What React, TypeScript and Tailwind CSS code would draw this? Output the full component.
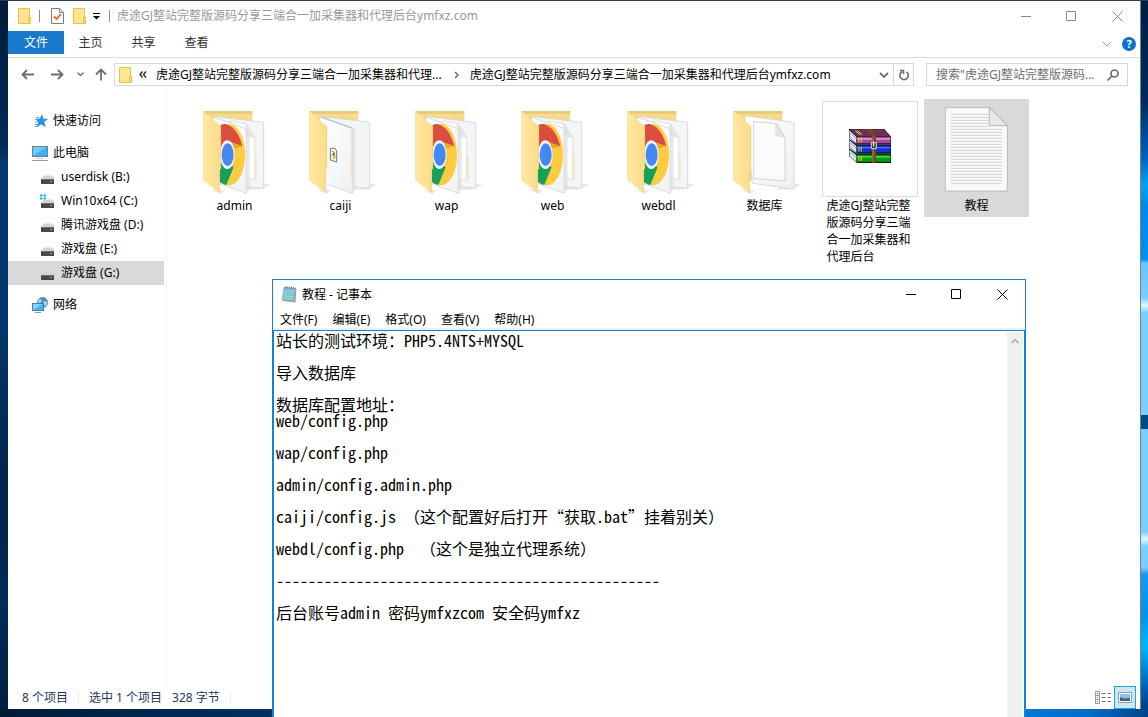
import type { ReactNode } from "react";

const uiFont = "font-['Noto_Sans','Noto_Sans_CJK_SC',sans-serif]";

const siteName = "虎途GJ整站完整版源码分享三端合一加采集器和代理";

const noteText = `站长的测试环境：PHP5.4NTS+MYSQL

导入数据库

数据库配置地址：
web/config.php

wap/config.php

admin/config.admin.php

caiji/config.js （这个配置好后打开“获取.bat”挂着别关）

webdl/config.php  （这个是独立代理系统）

------------------------------------------------

后台账号admin 密码ymfxzcom 安全码ymfxz`;

function SmallFolder() {
  return (
    <svg viewBox="0 0 14 16" className="h-4 w-[14px] shrink-0">
      <path d="M.5.5h11v9h1v6H.5z" fill="#ffe58f" stroke="#e8c34a" />
      <path d="M10.500 9.500h2v6h-2z" fill="#f7d874" stroke="#e8c34a" />
    </svg>
  );
}

function CheckedDoc() {
  return (
    <svg viewBox="0 0 13 16" className="h-4 w-[13px] shrink-0" fill="none">
      <path d="M.5.5h8l4 4v11H.5z" fill="#fbfbfb" stroke="#7d7d7d" />
      <path d="M8.500.5v4h4" stroke="#7d7d7d" />
      <path d="m3 8.500 2.500 2.500L10 6" stroke="#e8602c" strokeWidth="1.800" />
    </svg>
  );
}

function StarIcon() {
  return (
    <svg viewBox="0 0 16 16" className="h-4 w-4">
      <path d="m10 2 1 4 4.500.2-3.700 2.600 1.400 4.700-4-2.600-4.200 2.900 1.600-4.700L4 6.200l4-.2z" fill="#2196e8" stroke="#1583d0" strokeWidth=".6" />
      <path d="M4 4.500h3M3 6.500h2M3.500 9h2M3 11.500h2M2.500 13.500h2" stroke="#4aaeec" />
    </svg>
  );
}

function ComputerIcon() {
  return (
    <svg viewBox="0 0 16 16" className="h-4 w-4">
      <rect x=".5" y="1.500" width="15" height="10" fill="#3db2f7" stroke="#5f7f95" />
      <path d="M1 11V2h13z" fill="#72cbfb" />
      <path d="M5 13.500h6" stroke="#c3ced6" />
      <path d="M0 15.500h16" stroke="#8aa0af" />
    </svg>
  );
}

function DriveIcon({ system = false }: { system?: boolean }) {
  return (
    <svg viewBox="0 0 16 16" className="h-4 w-4">
      <path d="M3.500 6.500h9L15 10H1z" fill="#d3d5d7" />
      <path d="M1 10h13v5H1z" fill="#45474a" />
      <path d="M1 10.500h13" stroke="#6d6f72" />
      <path d="M10 12.500h2" stroke="#4fe05a" />
      {system && (
        <>
          <path d="M0 1h7v6H0z" fill="#fff" />
          <path d="M0 1.500h2.500v2H0zm3.500 0h2.500v2H3.500zM0 4.500h2.500v2H0zm3.500 0h2.500v2H3.500z" fill="#19b2ec" />
        </>
      )}
    </svg>
  );
}

function NetworkIcon() {
  return (
    <svg viewBox="0 0 16 16" className="h-4 w-4">
      <circle cx="10.500" cy="5.500" r="5.200" fill="#4a93c0" stroke="#6d8da3" strokeWidth=".6" />
      <path d="M7 2.500c2-.8 3 .5 2.500 2S6.500 6 6 5zM12 4l3 1-1 4-3-2z" fill="#a8dcf0" />
      <rect x=".5" y="6.500" width="11" height="7" fill="#43b5f7" stroke="#477f9f" />
      <path d="M1 13V7h9z" fill="#85d3fb" />
      <path d="M3 15.500h6" stroke="#7f9caf" />
    </svg>
  );
}

function NotepadIcon() {
  return (
    <svg viewBox="0 0 16 17" className="h-[17px] w-4">
      <path d="m4 2 11.500.5-1 14L2 15z" fill="#b6a97c" />
      <path d="m3 1.500 11.500.5-1.500 13.500L1 14z" fill="#7cc3d4" stroke="#6797a5" strokeWidth=".5" />
      <path d="m3 5 10.500.5M2.600 7.500l10.500.5M2.200 10l10.500.5M1.800 12.300l10.500.6" stroke="#a6dbe6" strokeWidth=".7" />
      <path d="M4.500.5v2M6.500.5v2M8.500.7v2M10.500.7v2M12.500 1v2" stroke="#5d696e" strokeWidth=".8" />
    </svg>
  );
}

type FolderKind = "chrome" | "script" | "doc";

function FolderIcon({ kind }: { kind: FolderKind }) {
  return (
    <svg viewBox="-15 18 297 288" className="h-24 w-[99px]">
      <defs>
        <linearGradient id="flap" x1="0" x2="1">
          <stop offset="0" stopColor="#ffe7a3" />
          <stop offset="1" stopColor="#fcdc88" />
        </linearGradient>
        <linearGradient id="sheet" x1="0" y1="0" x2="1" y2="1">
          <stop offset="0" stopColor="#fff" />
          <stop offset="1" stopColor="#eff1f3" />
        </linearGradient>
        <clipPath id="page">
          <path d="M89 66 169 101v194L89 268z" />
        </clipPath>
      </defs>
      <path d="M190 258l54 12-34 14h-40zM60 283l45 2-14 12z" fill="#e4e4e4" opacity=".8" />
      <path d="M39 48h148v210H39z" fill="#f7da8c" />
      <path d="M39 48h148v8H50z" fill="#e8ca74" />
      {kind === "doc" ? (
        <>
          <path d="m74 62 148 20v200l-125-17z" fill="url(#sheet)" stroke="#c9ccd0" strokeWidth="2" />
          <path d="m101 80 70 6 24 42v130l-94-8z" fill="#fafbfc" stroke="#bfc4ca" strokeWidth="2" />
          <path d="m166 85 28 43-26-6z" fill="#e6e7e9" stroke="#c8cacc" />
          <path d="M101 80 166 85 194 128M198 180v75" fill="none" stroke="#f2d999" strokeWidth="2" strokeDasharray="12 5" />
        </>
      ) : (
        <>
          <path d="m74 64 147 18v198l-100-10z" fill="#f4f5f7" stroke="#c8cbce" strokeWidth="2" />
          {kind === "chrome" && (
            <>
              <path d="m120 78 48 8 26 42v125h-50z" fill="#fff" stroke="#e7d7a9" strokeWidth="2" />
              <path d="m167 86 27 42-30-8z" fill="#e7e8ea" stroke="#c9c9c9" />
              <path d="M198 182v73" stroke="#f0d890" strokeWidth="2" />
            </>
          )}
          <path d="m70 66 99 35v194L89 266z" fill="url(#sheet)" stroke="#c7cacd" strokeWidth="2" />
          <path d="M170 102h9v178l-9 15z" fill="#dcdee0" opacity=".7" />
        </>
      )}
      {kind === "chrome" && (
        <g clipPath="url(#page)">
          <ellipse cx="117" cy="179" rx="48" ry="92" fill="#fccb3e" />
          <path d="M85 100c6-16 20-16 34-8 18 10 32 34 38 62l-46-16-26 26z" fill="#dc4c40" />
          <path d="m113 138 44 16-30 8z" fill="#e6a92f" />
          <path d="M85 197l46 19-22 54c-9-2-17-6-24-12z" fill="#16a05a" />
          <ellipse cx="112" cy="179" rx="22" ry="43" fill="#f1f4fb" />
          <ellipse cx="113" cy="179" rx="18" ry="34" fill="#4688f1" />
        </g>
      )}
      {kind === "script" && (
        <>
          <path d="M166 104v150" stroke="#f3dfa5" strokeWidth="2" />
          <path d="m78 66 91 33" stroke="#b8b9ba" strokeWidth="3" />
          <path d="M103 160h14l5 8v33l-19-6z" fill="#f5f5f0" stroke="#777" strokeWidth="3" />
          <path d="M108 168l7 5-6 7 8 5-6 6" fill="none" stroke="#b9ac3f" strokeWidth="4" />
          <circle cx="114" cy="178" r="3" fill="#55575a" />
        </>
      )}
      <path d="M39 48 93 94v126l-4 6v67L39 256z" fill="url(#flap)" />
      <path d="M92 94v126l-4 6v67" fill="none" stroke="#eccf7d" strokeWidth="2" />
    </svg>
  );
}

function ArchiveIcon() {
  return (
    <svg viewBox="333 18 297 288" className="h-24 w-[99px]">
      <rect x="337.500" y="19.500" width="285" height="285" fill="#fff" stroke="#dcdcdc" strokeWidth="3" />
      {/* top book */}
      <path d="M417 102h106l20 23v23H441l-24-20z" fill="#1d1420" />
      <path d="M420 103h101l18 20H441z" fill="#6d3152" />
      <path d="M441 125h100v20H441z" fill="#a8489d" />
      <path d="M441 129h100v6H441z" fill="#da86cf" />
      <path d="m418 106 21 19v20l-20-17z" fill="#e5e2ea" />
      {/* middle book */}
      <path d="m417 132 24 16h102v28H441l-24-20z" fill="#101338" />
      <path d="M441 152h100v20H441z" fill="#1732c8" />
      <path d="M441 156h100v4H441z" fill="#5275fa" />
      <path d="m418 136 21 17v20l-20-17z" fill="#dfe4ec" />
      {/* bottom book */}
      <path d="m417 160 24 16h102v28H441l-24-20z" fill="#09260b" />
      <path d="M441 180h100v20H441z" fill="#0a9914" />
      <path d="M441 183h100v5H441z" fill="#2dd92c" />
      <path d="m418 164 21 17v20l-20-17z" fill="#dfe4ec" />
      <path d="M419 113l20 18M419 143l20 17M419 171l20 17" stroke="#878b93" strokeWidth="2" />
      <path d="M447 128v15M454 128v15M447 155v15M454 155v15M447 183v15M454 183v15M436 107l14 12M442 107l14 12" stroke="#d9d43a" strokeWidth="3" />
      <path d="m470 102 16 22v79h12v-81l-14-20z" fill="#79461b" />
      <path d="M489 125v77" stroke="#b97a3a" strokeWidth="3" />
      <path d="M484 143h15v18h-15z" fill="#444" stroke="#d5d5d5" strokeWidth="3" />
      <path d="M491 140v14" stroke="#fff" strokeWidth="3" />
    </svg>
  );
}

const textLines = Array.from({ length: 24 }, (_, i) => 58 + i * 9);

function TextFileIcon() {
  return (
    <svg viewBox="651 18 297 288" className="h-24 w-[99px]">
      <path d="M706 38h132l54 55v195H706z" fill="#f9f9fa" stroke="#a9a9a9" strokeWidth="2" />
      {textLines.map((y) => (
        <path key={y} d={`M722 ${y}h${y < 96 ? 114 : 154}`} stroke="#cfd1d3" strokeWidth="3" />
      ))}
      <path d="M838 38v54h54z" fill="#e8e8e9" stroke="#9b9b9b" strokeWidth="2" />
    </svg>
  );
}

const files: { name: string; icon: ReactNode; selected?: boolean }[] = [
  { name: "admin", icon: <FolderIcon kind="chrome" /> },
  { name: "caiji", icon: <FolderIcon kind="script" /> },
  { name: "wap", icon: <FolderIcon kind="chrome" /> },
  { name: "web", icon: <FolderIcon kind="chrome" /> },
  { name: "webdl", icon: <FolderIcon kind="chrome" /> },
  { name: "数据库", icon: <FolderIcon kind="doc" /> },
  { name: "虎途GJ整站完整版源码分享三端合一加采集器和代理后台", icon: <ArchiveIcon /> },
  { name: "教程", icon: <TextFileIcon />, selected: true },
];

const drives = [
  { name: "userdisk (B:)" },
  { name: "Win10x64 (C:)", system: true },
  { name: "腾讯游戏盘 (D:)" },
  { name: "游戏盘 (E:)" },
  { name: "游戏盘 (G:)", selected: true },
];

function WindowControls({ className }: { className: string }) {
  return (
    <div className={`flex h-full shrink-0 ${className}`}>
      <button aria-label="最小化" className="grid w-[46px] place-items-center">
        <svg viewBox="0 0 11 11" className="size-[11px]" stroke="currentColor"><path d="M0 5.500h10" /></svg>
      </button>
      <button aria-label="最大化" className="grid w-[45px] place-items-center">
        <svg viewBox="0 0 11 11" className="size-[11px]" stroke="currentColor" fill="none"><path d="M.5.5h9v9h-9z" /></svg>
      </button>
      <button aria-label="关闭" className="grid w-[46px] place-items-center">
        <svg viewBox="0 0 11 11" className="size-[11px]" stroke="currentColor"><path d="m.5.5 10 10m0-10-10 10" /></svg>
      </button>
    </div>
  );
}

function Chevron({ className }: { className: string }) {
  return (
    <svg viewBox="0 0 10 6" className={className} fill="none" stroke="currentColor">
      <path d="m1 1 4 4 4-4" />
    </svg>
  );
}

function NavItem({ icon, label, child, selected }: { icon: ReactNode; label: string; child?: boolean; selected?: boolean }) {
  return (
    <a
      href="#"
      className={`mr-[2px] flex h-6 items-center gap-[5px] ${child ? "pl-8" : "pl-6"} ${selected ? "bg-[#d9d9d9]" : ""}`}
    >
      {icon}
      {label}
    </a>
  );
}

function Explorer() {
  return (
    <main className="flex min-h-0 flex-1 flex-col bg-white">
      <header className="flex h-[30px] shrink-0 items-center pl-[10px] text-[#999]">
        <SmallFolder />
        <span className="ml-[7px] h-3 w-px bg-[#8c8c8c]" />
        <button aria-label="属性" className="ml-[11px]"><CheckedDoc /></button>
        <button aria-label="新建文件夹" className="ml-[9px]"><SmallFolder /></button>
        <button aria-label="自定义快速访问工具栏" className="ml-[6px] text-black">
          <svg viewBox="0 0 8 8" className="size-2"><path d="M0 1.500h7" stroke="currentColor" /><path d="M0 4h7L3.500 7.500z" fill="currentColor" /></svg>
        </button>
        <span className="ml-2 h-3 w-px bg-[#8c8c8c]" />
        <h1 className="ml-[7px] flex-1 truncate">{siteName}后台ymfxz.com</h1>
        <WindowControls className="text-[#8a8a8a]" />
      </header>

      <nav className="flex h-[27px] shrink-0 items-start border-b border-[#dadbdc] text-[#333]">
        <button className="h-[23px] w-14 bg-[#1979ca] text-white">文件</button>
        <button className="h-6 w-[53px]">主页</button>
        <button className="h-6 w-[53px]">共享</button>
        <button className="h-6 w-[53px]">查看</button>
        <button aria-label="展开功能区" className="ml-auto mt-[10px] text-[#999]"><Chevron className="h-[6px] w-[10px]" /></button>
        <button aria-label="帮助" className="ml-[10px] mr-1 mt-[6px] grid size-[14px] place-items-center rounded-full bg-[#0e72cc] text-[11px] font-bold text-white">?</button>
      </nav>

      <div className="flex h-[33px] shrink-0 items-center pl-1 pr-3 text-[#6d6d6d]">
        <button aria-label="后退" className="grid w-[30px] place-items-center">
          <svg viewBox="0 0 13 11" className="h-[11px] w-[13px]" fill="none" stroke="currentColor" strokeWidth="1.800"><path d="M13 5.500H1.500M6 1 1.500 5.500 6 10" /></svg>
        </button>
        <button aria-label="前进" className="grid w-[30px] place-items-center">
          <svg viewBox="0 0 13 11" className="h-[11px] w-[13px]" fill="none" stroke="currentColor" strokeWidth="1.800"><path d="M0 5.500h11.500M7 1l4.500 4.500L7 10" /></svg>
        </button>
        <button aria-label="最近浏览的位置" className="grid w-4 place-items-center">
          <svg viewBox="0 0 7 5" className="h-[5px] w-[7px]" fill="none" stroke="currentColor" strokeWidth="1.300"><path d="m.5.500 3 3 3-3" /></svg>
        </button>
        <button aria-label="上移" className="grid w-[26px] place-items-center">
          <svg viewBox="0 0 12 13" className="h-[13px] w-3" fill="none" stroke="currentColor" strokeWidth="1.800"><path d="M6 12.500V1.500M1 6.500l5-5 5 5" /></svg>
        </button>
        <div className="flex h-[23px] min-w-0 flex-1 items-center border border-[#d9d9d9] text-black">
          <span className="ml-1"><SmallFolder /></span>
          <button aria-label="上级文件夹" className="ml-[6px] grid w-2 place-items-center">
            <svg viewBox="0 0 8 7" className="h-[7px] w-2" fill="none" stroke="#222" strokeWidth="1.300"><path d="M3.500.5 1 3.500l2.500 3M7 .5 4.500 3.500 7 6.500" /></svg>
          </button>
          <button className="ml-[9px]">{siteName}...</button>
          <svg viewBox="0 0 5 8" className="ml-3 mr-[11px] h-2 w-[5px] shrink-0" fill="none" stroke="#666" strokeWidth="1.400"><path d="m1 1 3 3-3 3" /></svg>
          <button className="truncate">{siteName}后台ymfxz.com</button>
          <button aria-label="以前的位置" className="ml-auto mr-1 text-[#6d6d6d]">
            <svg viewBox="0 0 10 6" className="h-[6px] w-[10px]" fill="none" stroke="currentColor" strokeWidth="1.800"><path d="m1 1 4 4 4-4" /></svg>
          </button>
          <button aria-label="刷新" className="grid h-full w-5 place-items-center border-l border-[#d9d9d9] text-[#6d6d6d]">
            <svg viewBox="0 0 12 12" className="size-3" fill="none" stroke="currentColor" strokeWidth="1.600"><path d="M8.500 3A4.200 4.200 0 1 1 4 2.800M2 1.500h3.500V5" /></svg>
          </button>
        </div>
        <label className="ml-3 flex h-[23px] w-[202px] items-center border border-[#d9d9d9] pl-[9px] pr-2">
          <input
            aria-label="搜索"
            placeholder={'搜索"虎途GJ整站完整版源码...'}
            className="w-full min-w-0 flex-1 outline-none placeholder:text-[#6d6d6d]"
          />
          <svg viewBox="0 0 12 12" className="size-3 shrink-0" fill="none" stroke="currentColor" strokeWidth="1.700"><circle cx="7.500" cy="4.500" r="3.500" /><path d="m5 7-4.500 4.500" /></svg>
        </label>
      </div>

      <div className="flex min-h-0 flex-1 text-black">
        <aside className="w-[159px] shrink-0 border-r border-[#f3f3f3] pt-[18px]">
          <NavItem icon={<StarIcon />} label="快速访问" />
          <div className="my-2">
            <NavItem icon={<ComputerIcon />} label="此电脑" />
            {drives.map((d) => (
              <NavItem key={d.name} icon={<DriveIcon system={d.system} />} label={d.name} child selected={d.selected} />
            ))}
          </div>
          <NavItem icon={<NetworkIcon />} label="网络" />
        </aside>
        <ul className="flex flex-1 flex-wrap content-start gap-px pl-[15px] pt-2">
          {files.map((f) => (
            <li key={f.name} className={`flex w-[105px] flex-col items-center pb-[3px] pt-[2px] ${f.selected ? "self-start bg-[#d9d9d9]" : ""}`}>
              {f.icon}
              <span className="max-w-[88px] break-all leading-[17px]">{f.name}</span>
            </li>
          ))}
        </ul>
      </div>

      <footer className="flex h-[23px] shrink-0 items-center pl-[14px] pr-1 text-[#1e395b]">
        <span>8 个项目</span>
        <span className="mx-[10px] h-3 w-px bg-[#ececec]" />
        <span>选中 1 个项目</span>
        <span className="ml-[10px]">328 字节</span>
        <span className="ml-[10px] h-3 w-px bg-[#ececec]" />
        <button aria-label="详细信息" className="ml-auto mr-[3px]">
          <svg viewBox="0 0 16 13" className="h-[13px] w-4" fill="none" stroke="#999">
            <path d="M.5.5h4v12h-4zM.5 4.500h4M.5 8.500h4" />
            <path d="M6.500 2.500h4m2 0h4m-10 4h4m2 0h4m-10 4h4m2 0h4" stroke="#777" />
            <path d="M2 2.500h1" stroke="#555" /><path d="M2 6.500h1" stroke="#2d8ce0" /><path d="M2 10.500h1" stroke="#c33" />
          </svg>
        </button>
        <button aria-label="大缩略图" className="grid h-[23px] w-[22px] place-items-center border border-[#26a0da] bg-[#cbe8f6]">
          <svg viewBox="0 0 14 11" className="h-[11px] w-[14px]">
            <path d="M.5.5h13v10H.5z" fill="#fff" stroke="#999" />
            <path d="M2 2h10v7H2z" fill="#8cc0f2" />
            <path d="m2 5 4 1.500 6-.5v3H2z" fill="#3c6b58" />
            <path d="M2 8h10v1H2z" fill="#2f5f9c" />
          </svg>
        </button>
      </footer>
    </main>
  );
}

const menus = ["文件(F)", "编辑(E)", "格式(O)", "查看(V)", "帮助(H)"];

function Notepad() {
  return (
    <section className="absolute bottom-0 left-[272px] right-[122px] top-[279px] flex flex-col border border-b-0 border-[#1481d6] bg-white text-black">
      <header className="flex h-[29px] shrink-0 items-center pl-2">
        <NotepadIcon />
        <h2 className="ml-[5px] flex-1">教程 - 记事本</h2>
        <WindowControls className="text-black" />
      </header>
      <nav className="flex h-[21px] shrink-0 items-center gap-[15px] border-b-2 border-[#f0f0f0] pl-[7px] pt-[2px]">
        {menus.map((m) => (
          <button key={m}>{m}</button>
        ))}
      </nav>
      <div className="flex min-h-0 flex-1 border border-b-0 border-[#1481d6] pr-px pt-px">
        <textarea
          aria-label="文本编辑器"
          spellCheck={false}
          defaultValue={noteText}
          className="min-w-0 flex-1 resize-none overflow-hidden pl-[2px] font-['Noto_Sans_Mono_CJK_SC','Noto_Sans_CJK_SC',monospace] text-base leading-4 outline-none"
        />
        <div className="w-4 shrink-0 bg-[#f0f0f0]">
          <button aria-label="向上滚动" className="grid h-[17px] w-full place-items-center text-[#b5b5b5]">
            <svg viewBox="0 0 8 6" className="h-[6px] w-2" fill="none" stroke="currentColor" strokeWidth="1.800"><path d="m.5 5 3.500-3.500L7.500 5" /></svg>
          </button>
        </div>
      </div>
    </section>
  );
}

export default function App() {
  return (
    <div
      className={`relative flex h-screen flex-col overflow-hidden bg-[#022347] text-xs ${uiFont}`}
    >
      <div className="h-px shrink-0 bg-[#2b3c55]" />
      <div className="flex min-h-0 flex-1">
        <div className="w-2 shrink-0 bg-[linear-gradient(#001b3b,#002b59_20%,#003a70_23%,#00386c_44%,#00244b_70%,#002d59_86%,#001f42)]" />
        <Explorer />
        <div className="w-2 shrink-0 border-l border-[#5f8ba8] bg-[linear-gradient(#001e42,#002b59_14%,#0060bd_22%,#00a3f5_26%,#0088e8_29%,#0090ee_36.500%,#67c5fb_37%,#7acffe_42%,#e5f8ff_43%,#7acffe_44%,#7acffe_58.500%,#004a88_58.500%,#004a88_60.500%,#7acffe_60.500%,#7acffe_75%,#e5f8ff_76%,#7acffe_77%,#7acffe_80%,#1798ed_81%,#0093ed_87%,#00b4ff_91%,#0060b4_97%,#003f83)]" />
      </div>
      <div className="h-2 shrink-0 bg-[linear-gradient(90deg,#001a38,#002f5c_22%,#0078d8_89%,#006cc8_95%,#004386)]" />
      <Notepad />
    </div>
  );
}
